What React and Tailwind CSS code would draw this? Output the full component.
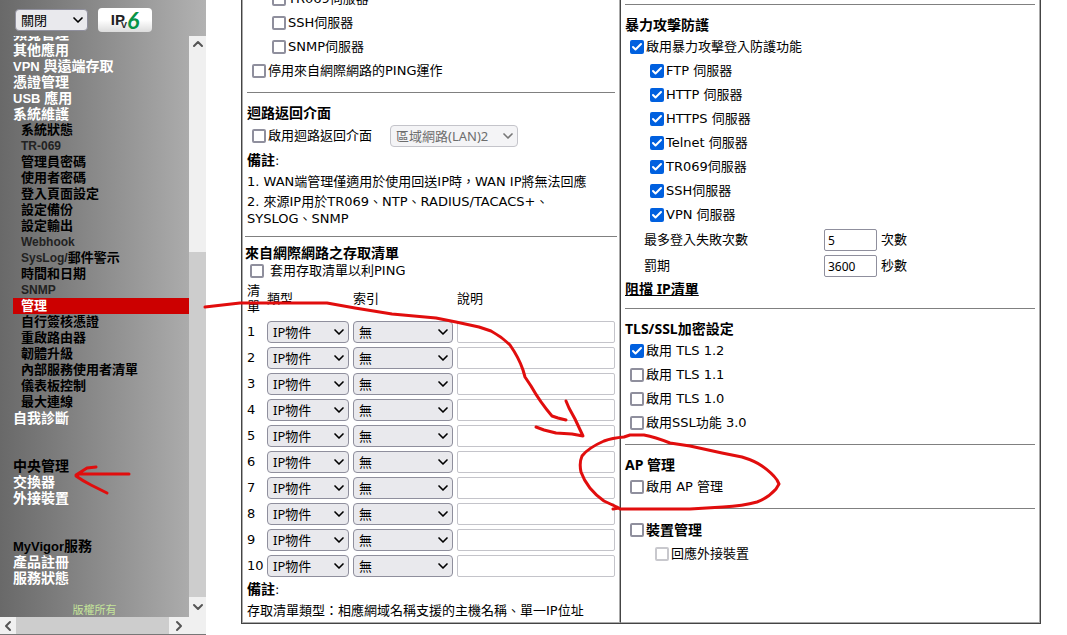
import { useState } from "react";
import { Check, ChevronDown, ChevronLeft, ChevronRight, ChevronUp } from "lucide-react";

const topMenu = ["頻寬管理", "其他應用", "VPN 與遠端存取", "憑證管理", "USB 應用", "系統維護"];

const maintenanceMenu = [
  "系統狀態",
  "TR-069",
  "管理員密碼",
  "使用者密碼",
  "登入頁面設定",
  "設定備份",
  "設定輸出",
  "Webhook",
  "SysLog/郵件警示",
  "時間和日期",
  "SNMP",
  "管理",
  "自行簽核憑證",
  "重啟路由器",
  "韌體升級",
  "內部服務使用者清單",
  "儀表板控制",
  "最大連線",
];

const bruteForceServices = [
  "FTP 伺服器",
  "HTTP 伺服器",
  "HTTPS 伺服器",
  "Telnet 伺服器",
  "TR069伺服器",
  "SSH伺服器",
  "VPN 伺服器",
];

const accessRows = [1, 2, 3, 4, 5, 6, 7, 8, 9, 10];

function Checkbox({ label, checked = false, disabled = false, className = "", labelClass = "" }) {
  const [on, setOn] = useState(checked);

  return (
    <label className={`flex h-6 items-center gap-0.5 ${className}`}>
      <span className="relative block size-3.5 shrink-0">
        <input
          type="checkbox"
          checked={on}
          disabled={disabled}
          onChange={(e) => setOn(e.target.checked)}
          className="block size-3.5 appearance-none rounded-xs border-2 border-[#8f8f9d] bg-white checked:border-[#0060df] checked:bg-[#0060df] disabled:border-[#c8c8cd]"
        />
        {on && (
          <Check
            className="pointer-events-none absolute inset-0 m-auto size-3 text-white"
            strokeWidth={4}
          />
        )}
      </span>
      <span className={labelClass}>{label}</span>
    </label>
  );
}

function Select({ options, label, disabled = false, className = "" }) {
  return (
    <div className={`relative ${className}`}>
      <select
        aria-label={label}
        disabled={disabled}
        className="block h-full w-full appearance-none rounded border border-[#8f8f9d] bg-[#e9e9ed] pl-[5px] font-['Noto_Sans','Noto_Sans_CJK_TC',sans-serif] text-[13px] leading-5 text-black disabled:border-[#c4c4ca] disabled:bg-[#f4f4f6] disabled:text-[#6d6d6d] disabled:opacity-100"
      >
        {options.map((o) => (
          <option key={o}>{o}</option>
        ))}
      </select>
      <ChevronDown
        className={`pointer-events-none absolute inset-y-0 right-0.5 my-auto size-4 ${disabled ? "text-[#777]" : "text-black"}`}
        strokeWidth={2.5}
      />
    </div>
  );
}

function Divider() {
  return <hr className="my-[9px] border-[#808080]" />;
}

function Heading({ children }) {
  return (
    <h2 className="h-[21px] font-['Noto_Sans','Noto_Sans_CJK_TC',sans-serif] text-[14px] leading-[21px] font-bold">
      {children}
    </h2>
  );
}

// Latin words in the menu are set one size smaller than the Chinese ones
function MenuText({ text, latinClass }) {
  return text.split(/([A-Za-z][\w/-]*)/).map((part, i) =>
    i % 2 ? (
      <span key={i} className={latinClass}>
        {part}
      </span>
    ) : (
      part
    )
  );
}

function MenuLink({ children, className = "" }) {
  return (
    <a href="#" className={`block h-4 pl-[13px] text-[14px] leading-4 whitespace-nowrap ${className}`}>
      <MenuText text={children} latinClass="text-[13px]" />
    </a>
  );
}

function Sidebar() {
  const [active, setActive] = useState("管理");

  return (
    <aside className="flex h-screen w-[206px] shrink-0 flex-col border-b border-[#777] bg-linear-to-r from-[#696969] to-[#b2b2b2] font-['Liberation_Sans','Noto_Sans_CJK_TC',sans-serif]">
      <div className="flex h-9 shrink-0 items-center gap-2.5 pt-1 pl-[15px]">
        <Select label="自動登出" options={["關閉"]} className="h-[22px] w-[73px]" />
        <button
          aria-label="IPv6"
          className="flex h-6 w-[54px] items-center justify-center rounded bg-linear-to-b from-white via-white to-[#dcdcdc]"
        >
          <span className="text-[15px] leading-6 font-bold text-[#222]">IP</span>
          <span className="-ml-1 pt-2.5 text-[9px] leading-3 font-bold text-[#222]">V</span>
          <span className="font-['Lato',sans-serif] text-[23px] leading-6 font-bold text-[#079447] italic">
            6
          </span>
        </button>
      </div>

      <div className="flex min-h-0 flex-1">
        <nav className="min-w-0 flex-1 overflow-hidden font-bold">
          <div className="-mt-2.5 text-white">
            {topMenu.map((m) => (
              <MenuLink key={m}>{m}</MenuLink>
            ))}
          </div>
          <ul className="pl-[13px] text-[13px] leading-4">
            {maintenanceMenu.map((m) => (
              <li key={m}>
                <a
                  href="#"
                  onClick={() => setActive(m)}
                  className={`block h-4 pl-2 whitespace-nowrap ${m === active ? "bg-[#cc0000] text-white" : "text-black"}`}
                >
                  <MenuText text={m} latinClass="text-[12px] text-[#222]" />
                </a>
              </li>
            ))}
          </ul>
          <MenuLink className="text-white">自我診斷</MenuLink>

          <div className="mt-8 text-white">
            <MenuLink className="text-black">中央管理</MenuLink>
            <MenuLink>交換器</MenuLink>
            <MenuLink>外接裝置</MenuLink>
          </div>

          <div className="mt-8 text-white">
            <MenuLink className="text-black">MyVigor服務</MenuLink>
            <MenuLink>產品註冊</MenuLink>
            <MenuLink>服務狀態</MenuLink>
          </div>

          <p className="mt-4 text-center text-[11px] leading-4 font-normal text-[#c5e59a]">版權所有</p>
        </nav>

        {/* Vertical scrollbar */}
        <div className="flex w-[17px] flex-col items-center bg-[#f0f0f0] text-[#555]">
          <ChevronUp className="size-4 shrink-0" strokeWidth={3} />
          <div className="flex-[200]" />
          <div className="w-full flex-[344] bg-[#cdcdcd]" />
          <ChevronDown className="my-0.5 size-4 shrink-0" strokeWidth={3} />
        </div>
      </div>

      {/* Horizontal scrollbar */}
      <div className="flex h-[17px] shrink-0 items-center bg-[#f0f0f0] pr-[17px] text-[#555]">
        <ChevronLeft className="size-4 shrink-0" strokeWidth={3} />
        <div className="h-full flex-1 bg-[#cdcdcd]" />
        <ChevronRight className="mx-0.5 size-4 shrink-0" strokeWidth={3} />
      </div>
    </aside>
  );
}

function AccessList() {
  return (
    <table className="w-full table-fixed">
      <thead>
        <tr className="h-10 text-left leading-4">
          <th className="w-5 pr-1.5 font-normal">清單</th>
          <th className="w-[86px] font-normal">類型</th>
          <th className="w-[104px] font-normal">索引</th>
          <th className="font-normal">說明</th>
        </tr>
      </thead>
      <tbody>
        {accessRows.map((n) => (
          <tr key={n} className="h-[26px]">
            <td>{n}</td>
            <td className="pr-1">
              <Select label={`類型 ${n}`} options={["IP物件"]} className="h-[22px]" />
            </td>
            <td className="pr-1">
              <Select label={`索引 ${n}`} options={["無"]} className="h-[22px]" />
            </td>
            <td>
              <input
                aria-label={`說明 ${n}`}
                className="block h-[22px] w-full rounded-xs border border-[#c4c4ca] bg-white px-1"
              />
            </td>
          </tr>
        ))}
      </tbody>
    </table>
  );
}

function NumberField({ id, label, value, unit }) {
  return (
    <div className="flex h-[26px] items-center pl-[19px]">
      <label htmlFor={id} className="w-[180px]">
        {label}
      </label>
      <input
        id={id}
        defaultValue={value}
        className="h-[22px] w-[53px] rounded-xs border border-[#8f8f9d] bg-white px-[3px] font-['Noto_Sans',sans-serif] text-[12px]"
      />
      <span className="ml-1">{unit}</span>
    </div>
  );
}

// Red pen marks drawn over the page
function PenMarks() {
  return (
    <svg
      className="pointer-events-none absolute top-0 left-0"
      width="1067"
      height="635"
      fill="none"
      stroke="#e10d0d"
      strokeWidth="3"
      strokeLinecap="round"
      strokeLinejoin="round"
    >
      <path d="M205 307 L240 303 H327 L355 308 L392 314 L436 318 L456 322 L479 327 L491 331 Q502 337 510 345 Q519 358 523 370 L525 377 L531 386 Q540 402 552 416 L558 418 L566 420" />
      <path d="M566 401 L569 408 L575 419 L583 436 L572 434 L556 433 L544 430 L536 427" />
      <path d="M613 509 L619 508 L604 501 Q587 489 581 472 Q579 463 582 456 Q588 448 604 441 Q612 438 624 437 L630 435 L644 435 Q655 437 670 443 L690 446 L722 453 L742 457 Q755 461 762 466 Q772 473 777 480 L779 484 L776 489 Q768 498 757 502 Q743 506 723 507 L690 509 H620 L617 507" />
      <path d="M129 474 H79 L76 476 Q83 481 91 485 L107 493 M76 475 L87 468 L96 467" />
    </svg>
  );
}

export default function App() {
  return (
    <div className="relative flex h-screen overflow-hidden bg-white text-black">
      <Sidebar />

      <main className="min-w-0 flex-1 pr-[26px] pl-[35px] font-['DejaVu_Sans','Noto_Sans_CJK_TC',sans-serif] text-[13px]">
        <div className="-mt-[13px] grid grid-cols-[9fr_10fr] border border-t-0 border-[#444]">
          <section className="border border-t-0 border-[#aaa] px-1">
            <Checkbox label="TR069伺服器" className="pl-[25px]" />
            <Checkbox label="SSH伺服器" className="pl-[25px]" />
            <Checkbox label="SNMP伺服器" className="pl-[25px]" />
            <Checkbox label="停用來自網際網路的PING運作" className="pl-[5px]" />

            <Divider />
            <Heading>迴路返回介面</Heading>
            <div className="flex h-[26px] items-center gap-[18px] pl-[5px]">
              <Checkbox label="啟用迴路返回介面" />
              <Select
                label="迴路返回介面"
                options={["區域網路(LAN)2"]}
                disabled
                className="h-[22px] w-32"
              />
            </div>
            <p className="leading-[22px]">
              <b className="text-[14px]">備註</b>:
            </p>
            <p className="leading-5 whitespace-nowrap">
              1. WAN端管理僅適用於使用回送IP時，WAN IP將無法回應
            </p>
            <p className="mt-px leading-[17px]">
              2. 來源IP用於TR069、NTP、RADIUS/TACACS+、
              <br />
              SYSLOG、SNMP
            </p>

            <div className="-mx-0.5 -mb-1">
              <Divider />
              <div className="-mt-1">
                <Heading>來自網際網路之存取清單</Heading>
              </div>
              <Checkbox
                label="套用存取清單以利PING"
                className="-mt-1 pl-[5px]"
                labelClass="pl-1"
              />
            </div>
            <AccessList />
            <p className="leading-5">
              <b className="text-[14px]">備註</b>:
            </p>
            <p className="leading-[22px] whitespace-nowrap">
              存取清單類型：相應網域名稱支援的主機名稱、單一IP位址
            </p>
          </section>

          <section className="border border-t-0 border-[#aaa] border-l-[#444] px-1 pt-2">
            <Divider />
            <Heading>暴力攻擊防護</Heading>
            <Checkbox label="啟用暴力攻擊登入防護功能" checked className="pl-[5px]" />
            {bruteForceServices.map((s) => (
              <Checkbox key={s} label={s} checked className="pl-[25px]" />
            ))}
            <NumberField id="max-fail" label="最多登入失敗次數" value="5" unit="次數" />
            <NumberField id="penalty" label="罰期" value="3600" unit="秒數" />
            <a
              href="#"
              className="block h-5 font-['Noto_Sans','Noto_Sans_CJK_TC',sans-serif] text-[14px] leading-5 font-bold underline"
            >
              阻擋 IP清單
            </a>

            <Divider />
            <Heading>TLS/SSL加密設定</Heading>
            <Checkbox label="啟用 TLS 1.2" checked className="pl-[5px]" />
            <Checkbox label="啟用 TLS 1.1" className="pl-[5px]" />
            <Checkbox label="啟用 TLS 1.0" className="pl-[5px]" />
            <Checkbox label="啟用SSL功能 3.0" className="pl-[5px]" />

            <Divider />
            <Heading>AP 管理</Heading>
            <Checkbox label="啟用 AP 管理" className="pl-[5px]" />

            <Divider />
            <Checkbox label="裝置管理" className="pl-[5px]" labelClass="text-[14px] font-bold" />
            <Checkbox label="回應外接裝置" disabled className="pl-[30px]" />
          </section>
        </div>
      </main>

      <PenMarks />
    </div>
  );
}
